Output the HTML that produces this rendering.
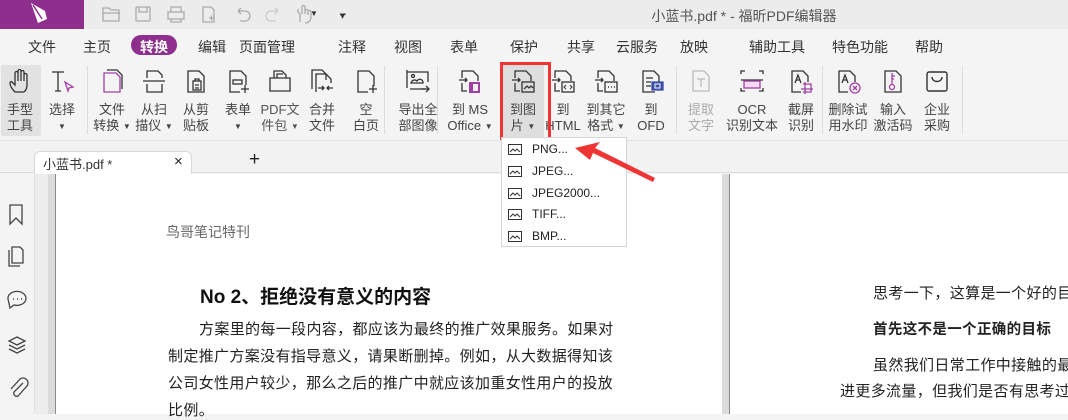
<!DOCTYPE html>
<html><head><meta charset="utf-8"><style>
*{margin:0;padding:0;box-sizing:border-box}
body{width:1068px;height:414px;overflow:hidden;position:relative;background:#f4f4f4;font-family:"Liberation Sans","Noto Sans CJK SC",sans-serif;color:#333}
.abs{position:absolute}
.title{left:0;top:0;width:1068px;height:29px;background:#ececec}
.logo{left:0;top:0;width:84px;height:29px;background:#8e2f8e}
.menu{left:0;top:29px;width:1068px;height:33px;background:#f4f4f4}
.mi{position:absolute;top:37px;font-size:14px;color:#333;transform:translateX(-50%);white-space:nowrap}
.pill{left:131px;top:35px;width:46px;height:20px;border-radius:10px;background:#8e2f8e}
.ribbon{left:0;top:62px;width:1068px;height:78px;background:#f4f4f4}
.btn{position:absolute;top:62px;width:44px;text-align:center;font-size:13px;line-height:16px;color:#444;transform:translateX(-50%)}
.btn svg{display:block;margin:5px auto 7px;width:28px;height:28px}
.sep{position:absolute;top:66px;width:1px;height:68px;background:#dcdcdc}
.tri{font-size:8px;vertical-align:1px}
.tabbar{left:0;top:140px;width:1068px;height:33px;background:#f2f2f2;border-bottom:1px solid #ddd;border-top:1px solid #e4e4e4}
.page{background:#fff}
.pt{position:absolute;font-size:15px;color:#222;white-space:nowrap;letter-spacing:0.35px}
.dd{left:501px;top:137px;width:126px;height:110px;background:#fff;border:1px solid #d6d6d6}
.ddi{position:absolute;left:30px;font-size:12px;color:#222}
.ddic{position:absolute;left:6px;width:14px;height:11px}
</style></head><body>
<div class="abs title"></div>
<div class="abs logo"><svg width="84" height="29"><path d="M31 3 L45 11 L47 19 L38 23 Z" fill="#fff"/><path d="M33 5 L42 19" stroke="#8e2f8e" stroke-width="1.5"/></svg></div>
<svg class="abs" style="left:95px;top:2px" width="270" height="26" fill="none" stroke="#aaa" stroke-width="1.3">
<path d="M8 6h6l2 2h8v11H8z M8 11h17"/>
<rect x="41" y="5" width="14" height="14" rx="1"/><path d="M44 5v5h8V5"/>
<rect x="73" y="10" width="16" height="7"/><path d="M76 10V5h10v5 M76 17v3h10v-3"/>
<path d="M108 5h8l3 3v12h-11z M114 16h5 M116.5 13.5v5"/>
<path d="M143 9h7a5 5 0 0 1 0 10h-5 M143 9l3-3 M143 9l3 3"/>
<path d="M183 9h-7a5 5 0 0 0 0 10h5 M183 9l-3-3 M183 9l-3 3" stroke="#ccc"/>
<path d="M205 20v-8l-2-2v-3 M207 12V5a1.5 1.5 0 0 1 3 0v7 M210 9a1.5 1.5 0 0 1 3 0v4 M213 10a1.5 1.5 0 0 1 3 0v5c0 4-3 6-6 6"/>
</svg>
<div class="abs" style="left:310px;top:9px;font-size:8px;color:#333">▼</div>
<div class="abs" style="left:340px;top:8px;font-size:10px;color:#333;line-height:6px">‗<br>▾</div>
<div class="abs" style="left:0;top:6px;width:1068px;padding-left:420px;text-align:center;font-size:14px;color:#555">小蓝书.pdf * - 福昕PDF编辑器</div>

<div class="abs menu"></div>
<div class="abs pill"></div>
<div class="mi" style="left:42px">文件</div><div class="mi" style="left:97px">主页</div>
<div class="mi" style="left:154px;color:#fff;font-weight:bold">转换</div>
<div class="mi" style="left:212px">编辑</div><div class="mi" style="left:267px">页面管理</div>
<div class="mi" style="left:352px">注释</div><div class="mi" style="left:408px">视图</div>
<div class="mi" style="left:464px">表单</div><div class="mi" style="left:524px">保护</div>
<div class="mi" style="left:581px">共享</div><div class="mi" style="left:637px">云服务</div>
<div class="mi" style="left:694px">放映</div><div class="mi" style="left:777px">辅助工具</div>
<div class="mi" style="left:860px">特色功能</div><div class="mi" style="left:929px">帮助</div>

<div class="abs ribbon"></div>
<div class="abs" style="left:1px;top:65px;width:40px;height:71px;background:#e2e2e2;border-radius:2px"></div>
<div class="abs" style="left:503px;top:65px;width:41px;height:72px;background:#dedede"></div>
<div class="sep" style="left:87px"></div><div class="sep" style="left:384px"></div><div class="sep" style="left:437px"></div>
<div class="sep" style="left:676px"></div><div class="sep" style="left:822px"></div><div class="sep" style="left:962px"></div>

<div class="btn" style="left:20px"><svg viewBox="0 0 28 28" fill="none" stroke="#333" stroke-width="1.3"><path d="M9 25c-3-3-5-6-5-9 0-1 1-2 2-1l3 3V6a1.5 1.5 0 0 1 3 0v8V4a1.5 1.5 0 0 1 3 0v10V5a1.5 1.5 0 0 1 3 0v9V8a1.5 1.5 0 0 1 3 0v10c0 4-2 7-4 7z"/></svg>手型<br>工具</div>
<div class="btn" style="left:62px"><svg viewBox="0 0 28 28" fill="none" stroke="#333" stroke-width="1.3"><path d="M4 5h12 M10 5v19 M7 24h6"/><path d="M17 15l8 5-4 1-1 3z" stroke="#a23fa3"/></svg>选择<br><span class="tri">▼</span></div>
<div class="btn" style="left:112px"><svg viewBox="0 0 28 28" fill="none" stroke="#333" stroke-width="1.3"><path d="M9 3h10l5 5v14" stroke="#333"/><path d="M6 6h12l4 4v15H6z" stroke="#a23fa3"/></svg>文件<br>转换 <span class="tri">▼</span></div>
<div class="btn" style="left:154px"><svg viewBox="0 0 28 28" fill="none" stroke="#333" stroke-width="1.3"><path d="M7 11V4h11l4 4v3 M3 14h22 M7 17v8h15v-8"/></svg>从扫<br>描仪 <span class="tri">▼</span></div>
<div class="btn" style="left:196px"><svg viewBox="0 0 28 28" fill="none" stroke="#333" stroke-width="1.3"><path d="M6 25V4h11l5 5v16z"/><rect x="11" y="14" width="8" height="9"/><path d="M13 14v-2h4v2 M13 18h4 M13 21h4"/></svg>从剪<br>贴板</div>
<div class="btn" style="left:238px"><svg viewBox="0 0 28 28" fill="none" stroke="#333" stroke-width="1.3"><path d="M16 25H6V4h11l5 5v9"/><rect x="9" y="13" width="9" height="4"/><path d="M17 22h8 M21 18v8"/></svg>表单<br><span class="tri">▼</span></div>
<div class="btn" style="left:280px"><svg viewBox="0 0 28 28" fill="none" stroke="#333" stroke-width="1.3"><path d="M4 11h20v13H4z M8 11V4h8l4 4v3 M11 11V7h6"/></svg><span style="color:#555">PDF文<br>件包 <span class="tri">▼</span></span></div>
<div class="btn" style="left:322px"><svg viewBox="0 0 28 28" fill="none" stroke="#333" stroke-width="1.3"><path d="M4 22V3h10l4 4v6 M8 25V7h10l5 5v4 M10 21h6 M14 19l2 2-2 2 M25 21h-6 M21 19l-2 2 2 2"/></svg>合并<br>文件</div>
<div class="btn" style="left:366px"><svg viewBox="0 0 28 28" fill="none" stroke="#333" stroke-width="1.3"><path d="M16 25H6V4h11l5 5v10 M17 22h8 M21 18v8"/></svg>空<br>白页</div>
<div class="btn" style="left:418px;width:50px"><svg viewBox="0 0 28 28" fill="none" stroke="#333" stroke-width="1.3"><path d="M3 19V5h21v10 M6 22h16 M3 3v18"/><circle cx="9" cy="9" r="1.5"/><path d="M7 16c1-3 4-4 6-2 2-3 6-2 6 2z M17 22h8 M22 19l3 3-3 3"/></svg>导出全<br>部图像</div>
<div class="btn" style="left:470px;width:50px"><svg viewBox="0 0 28 28" fill="none" stroke="#333" stroke-width="1.3"><path d="M6 16v8h5 M6 11V4h11l5 5v5 M3 13h8 M9 11l2 2-2 2"/><path d="M14 16h9v9h-9z M16 16v9" stroke="#a23fa3" stroke-width="2"/></svg>到 MS<br>Office <span class="tri">▼</span></div>
<div class="btn" style="left:523px"><svg viewBox="0 0 28 28" fill="none" stroke="#333" stroke-width="1.3"><path d="M6 16v8h5 M6 11V4h11l5 5v5 M3 13h8 M9 11l2 2-2 2"/><rect x="13" y="15" width="12" height="10"/><path d="M15 22l3-3 2 2 2-2 2 2"/></svg>到图<br>片 <span class="tri">▼</span></div>
<div class="btn" style="left:563px"><svg viewBox="0 0 28 28" fill="none" stroke="#333" stroke-width="1.3"><path d="M6 16v8h5 M6 11V4h11l5 5v5 M3 13h8 M9 11l2 2-2 2"/><rect x="13" y="15" width="12" height="10"/><path d="M17 18l-2 2 2 2 M21 18l2 2-2 2" stroke-width="1"/></svg>到<br>HTML</div>
<div class="btn" style="left:606px;width:50px"><svg viewBox="0 0 28 28" fill="none" stroke="#333" stroke-width="1.3"><path d="M6 16v8h5 M6 11V4h11l5 5v5 M3 13h8 M9 11l2 2-2 2"/><rect x="13" y="15" width="12" height="10"/><path d="M16 20h1 M19 20h1 M22 20h1" stroke-width="1.6"/></svg>到其它<br>格式 <span class="tri">▼</span></div>
<div class="btn" style="left:651px"><svg viewBox="0 0 28 28" fill="none" stroke="#333" stroke-width="1.3"><path d="M18 25H6V4h11l5 5v6 M9 11h7 M9 15h5 M9 19h5"/><rect x="15" y="15" width="11" height="8" fill="#3b4fa8" stroke="#3b4fa8"/><rect x="18" y="17" width="5" height="4" stroke="#fff" stroke-width="1"/></svg>到<br>OFD</div>
<div class="btn" style="left:701px;color:#aaa"><svg viewBox="0 0 28 28" fill="none" stroke="#bbb" stroke-width="1.3"><path d="M6 24V4h11l5 5v15z M10 12h8 M14 12v8"/></svg>提取<br>文字</div>
<div class="btn" style="left:752px;width:60px"><svg viewBox="0 0 28 28" fill="none" stroke="#333" stroke-width="1.3"><path d="M3 7V4h4 M21 4h4v3 M3 21v3h4 M21 24h4v-3 M3 13h22" /><rect x="6" y="14" width="16" height="7" fill="#f3dcf3" stroke="#a23fa3"/></svg>OCR<br>识别文本</div>
<div class="btn" style="left:801px"><svg viewBox="0 0 28 28" fill="none" stroke="#333" stroke-width="1.3"><path d="M14 25H5V4h11l5 5v6 M8 16l3-8 3 8 M9 13h4"/><path d="M16 17h8v8h-8 M18 15v12 M14 22h12" stroke="#a23fa3"/></svg>截屏<br>识别</div>
<div class="btn" style="left:848px;width:50px"><svg viewBox="0 0 28 28" fill="none" stroke="#333" stroke-width="1.3"><path d="M14 25H5V4h11l5 5v6 M8 16l3-8 3 8 M9 13h4"/><circle cx="21" cy="21" r="5" stroke="#a23fa3"/><path d="M19 19l4 4 M23 19l-4 4" stroke="#a23fa3"/></svg>删除试<br>用水印</div>
<div class="btn" style="left:893px;width:50px"><svg viewBox="0 0 28 28" fill="none" stroke="#333" stroke-width="1.3"><path d="M6 25V4h11l5 5v16z"/><circle cx="13" cy="20" r="2.5" stroke="#a23fa3"/><path d="M13 17.5V6 M13 9h3 M13 12h2" stroke="#a23fa3"/></svg>输入<br>激活码</div>
<div class="btn" style="left:937px"><svg viewBox="0 0 28 28" fill="none" stroke="#333" stroke-width="1.4"><rect x="4" y="5" width="20" height="19" rx="2"/><path d="M9 10c0 6 10 6 10 0"/></svg>企业<br>采购</div>

<div class="abs" style="left:500px;top:62px;width:51px;height:78px;border:3px solid #ef3434"></div>

<div class="abs tabbar"></div>
<div class="abs" style="left:34px;top:151px;width:158px;height:23px;background:#fff;border:1px solid #d8d8d8;border-bottom:none;border-radius:6px 6px 0 0;font-size:13px;color:#333;padding:2px 0 0 8px">小蓝书.pdf *<span style="position:absolute;left:139px;top:1px;font-size:15px;color:#222">×</span></div>
<div class="abs" style="left:249px;top:149px;font-size:19px;color:#222">+</div>

<div class="abs" style="left:0;top:174px;width:35px;height:240px;background:#f4f4f4;border-right:1px solid #e2e2e2"></div>
<div class="abs" style="left:35px;top:174px;width:13px;height:240px;background:#ededed"></div>
<div class="abs" style="left:48px;top:174px;width:7px;height:240px;background:#dcdcdc"></div>
<div class="abs" style="left:55px;top:174px;width:1px;height:240px;background:#8a8a8a"></div>
<div class="abs page" style="left:56px;top:174px;width:666px;height:240px"></div>
<div class="abs" style="left:722px;top:174px;width:7px;height:240px;background:#dcdcdc"></div>
<div class="abs" style="left:729px;top:174px;width:1px;height:240px;background:#8a8a8a"></div>
<div class="abs page" style="left:730px;top:174px;width:338px;height:240px"></div>

<svg class="abs" style="left:0;top:195px" width="35" height="219" fill="none" stroke="#444" stroke-width="1.3">
<path d="M10 10v19l6-6 6 6V10z"/>
<path d="M12 52h8l3 3v13h-11z M9 55v16h11"/>
<path d="M8 104a9 7 0 1 1 6 6l-4 3z"/><path d="M13 104h1 M17 104h1 M21 104h1" stroke-width="1.5"/>
<path d="M17 142l8 4-8 4-8-4z M9 150l8 4 8-4 M9 154l8 4 8-4"/>
<path d="M23 188l-9 9a3 3 0 0 0 4 4l9-10a5 5 0 0 0-7-7l-9 10"/>
</svg>

<div class="abs" style="left:166px;top:222px;font-size:14px;color:#666">鸟哥笔记特刊</div>
<div class="abs" style="left:200px;top:282px;font-size:19px;font-weight:bold;color:#111">No 2、拒绝没有意义的内容</div>
<div class="pt" style="left:199px;top:318px">方案里的每一段内容，都应该为最终的推广效果服务。如果对</div>
<div class="pt" style="left:168px;top:345px">制定推广方案没有指导意义，请果断删掉。例如，从大数据得知该</div>
<div class="pt" style="left:168px;top:372px">公司女性用户较少，那么之后的推广中就应该加重女性用户的投放</div>
<div class="pt" style="left:168px;top:399px">比例。</div>

<div class="pt" style="left:873px;top:282px">思考一下，这算是一个好的目</div>
<div class="pt" style="left:873px;top:318px;font-weight:bold;font-size:14.5px">首先这不是一个正确的目标</div>
<div class="pt" style="left:873px;top:354px">虽然我们日常工作中接触的最</div>
<div class="pt" style="left:840px;top:380px">进更多流量，但我们是否有思考过</div>

<div class="abs dd">
<svg class="ddic" style="top:6px" viewBox="0 0 14 11" fill="none" stroke="#333"><rect x=".5" y=".5" width="13" height="10"/><path d="M2 8l3-3 2 2 2-2 3 3"/></svg><div class="ddi" style="top:4px">PNG...</div>
<svg class="ddic" style="top:28px" viewBox="0 0 14 11" fill="none" stroke="#333"><rect x=".5" y=".5" width="13" height="10"/><path d="M2 8l3-3 2 2 2-2 3 3"/></svg><div class="ddi" style="top:26px">JPEG...</div>
<svg class="ddic" style="top:50px" viewBox="0 0 14 11" fill="none" stroke="#333"><rect x=".5" y=".5" width="13" height="10"/><path d="M2 8l3-3 2 2 2-2 3 3"/></svg><div class="ddi" style="top:48px">JPEG2000...</div>
<svg class="ddic" style="top:71px" viewBox="0 0 14 11" fill="none" stroke="#333"><rect x=".5" y=".5" width="13" height="10"/><path d="M2 8l3-3 2 2 2-2 3 3"/></svg><div class="ddi" style="top:69px">TIFF...</div>
<svg class="ddic" style="top:93px" viewBox="0 0 14 11" fill="none" stroke="#333"><rect x=".5" y=".5" width="13" height="10"/><path d="M2 8l3-3 2 2 2-2 3 3"/></svg><div class="ddi" style="top:91px">BMP...</div>
</div>
<svg class="abs" style="left:560px;top:140px" width="110" height="50"><path d="M15 8 L40 2 L35 8 L95 38 L93 42 L33 13 L30 20 Z" fill="#ef3434"/></svg>
</body></html>
